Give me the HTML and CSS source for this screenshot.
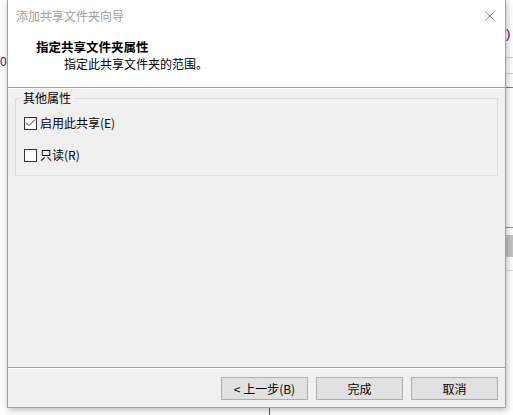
FILE: index.html
```html
<!DOCTYPE html>
<html lang="zh-CN">
<head>
<meta charset="utf-8">
<title>添加共享文件夹向导</title>
<link rel="stylesheet" href="styles.css">
</head>
<body>
<div class="desk">
  <div class="bg-left">0</div>
  <div class="bg-right">
    <span class="bg-paren">)</span>
    <i class="bg-line l1"></i>
    <i class="bg-line l2"></i>
    <i class="bg-line l3"></i>
    <i class="bg-line l4"></i>
    <i class="bg-block"></i>
    <i class="bg-line l5"></i>
  </div>
  <div class="bg-vline"></div>

  <div class="dialog">
    <div class="header">
      <div class="titlebar">
        <span class="title">添加共享文件夹向导</span>
        <svg class="close" width="10" height="10" viewBox="0 0 10 10">
          <path d="M0.5 0.5 L9.5 9.5 M9.5 0.5 L0.5 9.5" stroke="#8a8a8a" stroke-width="1" fill="none"/>
        </svg>
      </div>
      <div class="heading">指定共享文件夹属性</div>
      <div class="subheading">指定此共享文件夹的范围。</div>
    </div>

    <div class="body">
      <fieldset class="group">
        <legend class="group-title">其他属性</legend>
        <label class="check-row first">
          <span class="box">
            <svg width="11" height="11" viewBox="0 0 11 11">
              <path d="M1.2 4.8 L4 7.6 L10 1.6" stroke="#333" stroke-width="1" fill="none"/>
            </svg>
          </span>
          <span class="check-text">启用此共享(E)</span>
        </label>
        <label class="check-row second">
          <span class="box"></span>
          <span class="check-text">只读(R)</span>
        </label>
      </fieldset>
    </div>

    <div class="footer">
      <button class="btn">&lt; 上一步(B)</button>
      <button class="btn">完成</button>
      <button class="btn">取消</button>
    </div>
  </div>
</div>
</body>
</html>
```

FILE: styles.css
```css
* { box-sizing: border-box; }

html, body {
  margin: 0;
  padding: 0;
  background: #ffffff;
}

body {
  font-family: "Noto Sans CJK SC", "Noto Sans", sans-serif;
  font-size: 12px;
  color: #000;
}

.desk {
  position: relative;
  width: 513px;
  height: 415px;
  overflow: hidden;
  background: #ffffff;
}

/* background window remnants */
.bg-left {
  position: absolute;
  left: 0;
  top: 54px;
  font-family: "Liberation Sans", sans-serif;
  font-size: 12px;
  line-height: 16px;
  color: #1a2a60;
}

.bg-right {
  position: absolute;
  left: 505px;
  top: 0;
  width: 8px;
  height: 415px;
}

.bg-paren {
  position: absolute;
  left: 1px;
  top: 26px;
  font-family: "Liberation Sans", sans-serif;
  font-size: 13px;
  line-height: 16px;
  color: #1a2a60;
}

.bg-line {
  position: absolute;
  left: 0;
  width: 8px;
  height: 1px;
  background: #d0d0d0;
}
.bg-line.l1 { top: 57px; }
.bg-line.l2 { top: 73px; }
.bg-line.l3 { top: 87px; background: #7a7a7a; }
.bg-line.l4 { top: 227px; background: #8a8a8a; }
.bg-line.l5 { top: 270px; background: #dadada; }

.bg-block {
  position: absolute;
  left: 0;
  top: 235px;
  width: 8px;
  height: 22px;
  background: #c4c4c4;
}

.bg-vline {
  position: absolute;
  left: 269px;
  top: 400px;
  width: 1px;
  height: 15px;
  background: #555;
}

/* dialog */
.dialog {
  position: relative;
  z-index: 1;
  margin-left: 7px;
  width: 499px;
  height: 408px;
  border: 1px solid #a0a0a0;
  border-top: none;
  background: #f0f0f0;
  display: flex;
  flex-direction: column;
  box-shadow: 1px 2px 7px rgba(0, 0, 0, 0.28);
}

.header {
  height: 88px;
  background: #ffffff;
  border-bottom: 1px solid #a0a0a0;
}

.titlebar {
  height: 31px;
  display: flex;
  align-items: center;
  justify-content: space-between;
  padding: 0 10px 0 8px;
}

.title {
  color: #a0a0a0;
  font-size: 12px;
  line-height: 31px;
}

.close { display: block; }

.heading {
  margin-top: 7px;
  padding-left: 28px;
  font-weight: bold;
  font-size: 12.5px;
  line-height: 18px;
}

.subheading {
  padding-left: 56px;
  line-height: 16px;
}

.body {
  flex: 1;
  border-top: 1px solid #ffffff;
  padding: 0 7px;
}

.group {
  margin: 1px 0 0 0;
  padding: 0 0 12px 4px;
  border: 1px solid #dcdcdc;
  min-width: 0;
}

.group-title {
  padding: 0 3px;
  line-height: 16px;
  font-size: 12px;
}

.check-row {
  display: flex;
  align-items: center;
  height: 16px;
  padding-left: 4px;
}

.check-row.first { margin-top: 9px; }
.check-row.second { margin-top: 16px; }

.box {
  width: 13px;
  height: 13px;
  border: 1px solid #333;
  background: #ffffff;
  display: flex;
  align-items: center;
  justify-content: center;
  flex: none;
}

.box svg { display: block; }

.check-text {
  margin-left: 3px;
  line-height: 16px;
}

.footer {
  height: 40px;
  border-top: 1px solid #a0a0a0;
  box-shadow: inset 0 1px 0 #ffffff;
  padding: 9px 7px 0 0;
  display: flex;
  justify-content: flex-end;
  gap: 8px;
}

.btn {
  width: 87px;
  height: 23px;
  border: 1px solid #adadad;
  background: #e1e1e1;
  font-family: "Noto Sans CJK SC", "Noto Sans", sans-serif;
  font-size: 12px;
  line-height: 19px;
  color: #000;
  padding: 0;
  margin: 0;
}
```
